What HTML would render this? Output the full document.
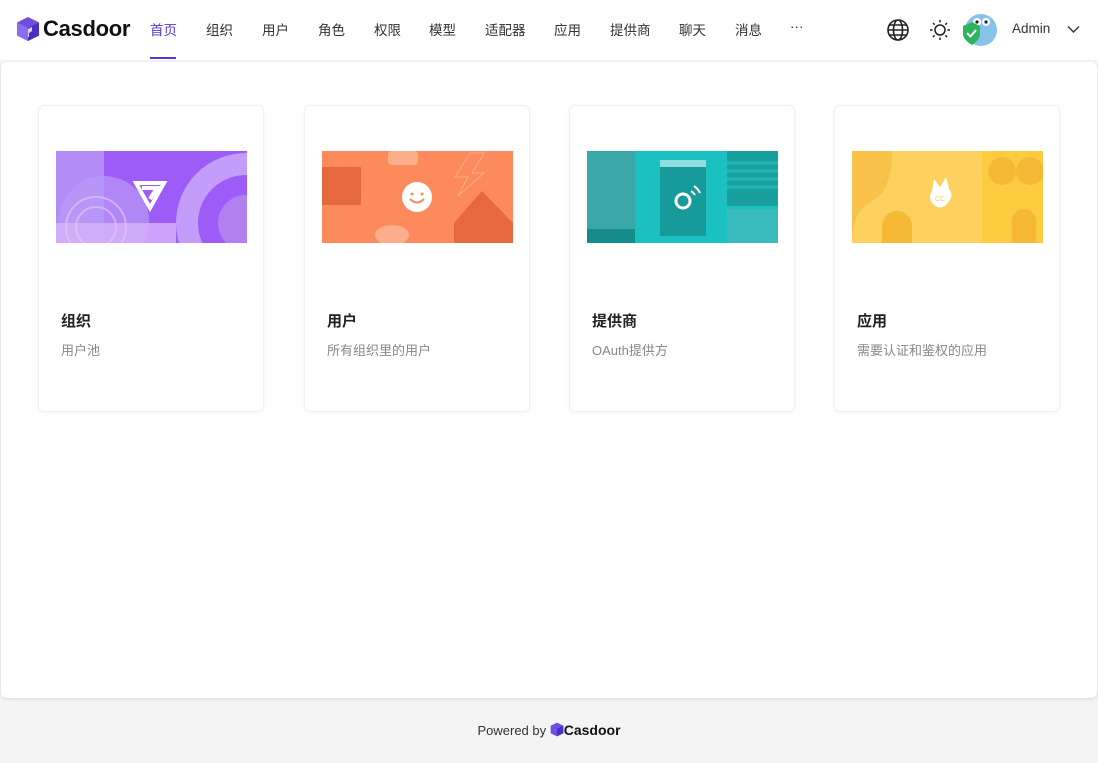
<!DOCTYPE html>
<html><head><meta charset="utf-8"><style>
*{margin:0;padding:0;box-sizing:border-box}
body{width:1098px;height:763px;background:#f4f4f4;font-family:"Liberation Sans","Noto Sans CJK SC",sans-serif;position:relative;overflow:hidden}
.hdr{position:absolute;left:0;top:0;width:1098px;height:60px;background:#fff}
.logo{position:absolute;left:16px;top:16px;display:flex;align-items:center}
.logo span{font-size:22px;font-weight:bold;color:#111;margin-left:3px;letter-spacing:-0.3px}
.nav{position:absolute;top:19px;font-size:13.5px;color:#333}
.act{color:#5734d3}
.ul{position:absolute;left:150px;top:57px;width:26px;height:2px;background:#5734d3}
.main{position:absolute;left:1px;top:62px;width:1096px;height:636px;background:#fff;border-radius:6px;box-shadow:0 1px 3px rgba(0,0,0,.12)}
.card{position:absolute;top:105px;width:226px;height:307px;background:#fff;border:1px solid #f0f0f0;border-radius:6px;box-shadow:0 1px 4px rgba(0,0,0,.05)}
.img{position:absolute;left:17px;top:45px;width:191px;height:92px;overflow:hidden}
.t{position:absolute;left:22px;top:204px;font-size:15px;font-weight:bold;color:#222}
.d{position:absolute;left:22px;top:234px;font-size:13px;color:#888}
.foot{position:absolute;top:722px;left:0;width:1098px;text-align:center;font-size:13px;color:#333}
</style></head><body>
<div class="hdr">
<div class="logo"><svg width="24" height="26" viewBox="0 0 24 26"><path d="M12 1L23 6.5V19.5L12 25L1 19.5V6.5Z" fill="#6d4ee0"/><path d="M1 6.5L12 12V25L1 19.5Z" fill="#8a6cf0"/><path d="M12 12L23 6.5V19.5L12 25Z" fill="#4a2fc0"/><path d="M12 13L16 11V15L13 17V21L12 21Z" fill="#fff" opacity=".8"/></svg><span>Casdoor</span></div>
<div class="nav act" style="left:150px">首页</div>
<div class="ul"></div>
<div class="nav" style="left:206px">组织</div>
<div class="nav" style="left:262px">用户</div>
<div class="nav" style="left:318px">角色</div>
<div class="nav" style="left:374px">权限</div>
<div class="nav" style="left:429px">模型</div>
<div class="nav" style="left:485px">适配器</div>
<div class="nav" style="left:554px">应用</div>
<div class="nav" style="left:610px">提供商</div>
<div class="nav" style="left:679px">聊天</div>
<div class="nav" style="left:735px">消息</div>
<div class="nav" style="left:790px">···</div>
<svg style="position:absolute;left:886px;top:18px" width="24" height="24" viewBox="0 0 24 24" fill="none" stroke="#222" stroke-width="1.6"><circle cx="12" cy="12" r="10"/><ellipse cx="12" cy="12" rx="4.5" ry="10"/><path d="M2 12H22M3.5 7H20.5M3.5 17H20.5"/></svg>
<svg style="position:absolute;left:929px;top:19px" width="22" height="22" viewBox="0 0 22 22" fill="none" stroke="#222" stroke-width="1.5"><circle cx="11" cy="11" r="5"/><path d="M11 1V3.5M11 18.5V21M1 11H3.5M18.5 11H21M4 4L5.7 5.7M16.3 16.3L18 18M4 18L5.7 16.3M16.3 5.7L18 4"/></svg>
<svg style="position:absolute;left:961px;top:12px" width="36" height="36" viewBox="0 0 36 36"><circle cx="20" cy="18" r="16" fill="#88c2e8"/><circle cx="16" cy="10" r="4" fill="#fff"/><circle cx="25" cy="10" r="4" fill="#fff"/><circle cx="16" cy="10" r="1.6" fill="#222"/><circle cx="25" cy="10" r="1.6" fill="#222"/><path d="M2 14L11 10L19 14V22C19 28 11 33 11 33C11 33 2 28 2 22Z" fill="#2fb35e"/><path d="M6 21L9.5 24.5L15 18" stroke="#fff" stroke-width="2" fill="none"/></svg>
<div class="nav" style="left:1012px;top:21px;font-size:13.5px">Admin</div>
<svg style="position:absolute;left:1067px;top:25px" width="13" height="9" viewBox="0 0 13 9" fill="none" stroke="#333" stroke-width="1.4"><path d="M1 1.5L6.5 7L12 1.5"/></svg>
</div>
<div class="main"></div>
<div class="card" style="left:38px"><div class="img"><svg width="191" height="92"><rect width="191" height="92" fill="#9d5cf8"/><rect width="48" height="92" fill="#b48cf7"/><circle cx="48" cy="70" r="45" fill="#b99af8" opacity=".7"/><circle cx="190" cy="72" r="70" fill="#c39df9"/><circle cx="190" cy="72" r="48" fill="#9d5cf8"/><circle cx="190" cy="72" r="28" fill="#b080f0"/><rect x="0" y="72" width="120" height="20" fill="#d8b4fa" opacity=".8"/><circle cx="40" cy="76" r="30" fill="none" stroke="#e4ccfc" stroke-width="2" opacity=".6"/><circle cx="40" cy="76" r="20" fill="none" stroke="#e4ccfc" stroke-width="2" opacity=".6"/><path d="M80 32H108L94 57Z M86 37L101 37L94 48" fill="none" stroke="#fff" stroke-width="4"/></svg></div><div class="t">组织</div><div class="d">用户池</div></div>
<div class="card" style="left:304px"><div class="img"><svg width="191" height="92"><rect width="191" height="92" fill="#fc8a5c"/><rect y="16" width="39" height="38" fill="#e6683e"/><rect x="66" y="0" width="30" height="14" rx="4" fill="#fcad8a"/><circle cx="95" cy="46" r="15" fill="#fff"/><path d="M88 48Q95 55 102 48" stroke="#fc8a5c" stroke-width="2" fill="none"/><circle cx="90" cy="43" r="1.5" fill="#fc8a5c"/><circle cx="100" cy="43" r="1.5" fill="#fc8a5c"/><path d="M132 92V72L160 40L191 72V92Z" fill="#e6683e"/><path d="M148 2H162L150 22H162L136 45L146 26H133Z" fill="none" stroke="#fcad8a"/><ellipse cx="70" cy="84" rx="17" ry="10" fill="#fcad8a"/></svg></div><div class="t">用户</div><div class="d">所有组织里的用户</div></div>
<div class="card" style="left:569px"><div class="img"><svg width="191" height="92"><rect width="191" height="92" fill="#1bc0c0"/><rect width="48" height="92" fill="#3aa8a8"/><rect y="78" width="48" height="14" fill="#158c8c"/><rect x="140" width="51" height="55" fill="#1a9f9f"/><path d="M140 12H191M140 20H191M140 28H191M140 36H191" stroke="#22b8b8" stroke-width="3"/><rect x="73" y="9" width="46" height="76" fill="#169a9a"/><rect x="73" y="9" width="46" height="7" fill="#8ee0e0"/><circle cx="96" cy="50" r="7" fill="none" stroke="#fff" stroke-width="3"/><path d="M104 40A12 12 0 0 1 108 44M107 35A18 18 0 0 1 113 42" stroke="#fff" stroke-width="2" fill="none"/><rect x="140" y="58" width="51" height="34" fill="#3bbcbc"/></svg></div><div class="t">提供商</div><div class="d">OAuth提供方</div></div>
<div class="card" style="left:834px"><div class="img"><svg width="191" height="92"><rect width="191" height="92" fill="#fdd160"/><rect x="130" width="61" height="92" fill="#fccc40"/><path d="M0 0H40Q40 40 20 50Q0 60 0 92Z" fill="#f7c14a"/><path d="M30 92V75A15 15 0 0 1 60 75V92" fill="#f5b935"/><path d="M160 92V70A12 12 0 0 1 184 70V92" fill="#f5b935"/><circle cx="150" cy="20" r="14" fill="#f5b935"/><circle cx="178" cy="20" r="14" fill="#f5b935"/><path d="M80 40L82 28L88 36L94 26L97 38Q102 44 97 50Q90 62 80 52Q76 46 80 40Z" fill="#fff"/><text x="83" y="50" font-size="7" fill="#fdd160" font-family="Liberation Sans">CC</text></svg></div><div class="t">应用</div><div class="d">需要认证和鉴权的应用</div></div>
<div class="foot">Powered by <svg width="14" height="15" viewBox="0 0 24 26" style="vertical-align:-2px"><path d="M12 1L23 6.5V19.5L12 25L1 19.5V6.5Z" fill="#6d4ee0"/><path d="M12 12L23 6.5V19.5L12 25Z" fill="#4a2fc0"/></svg><b style="font-size:14px;color:#111">Casdoor</b></div>
</body></html>
